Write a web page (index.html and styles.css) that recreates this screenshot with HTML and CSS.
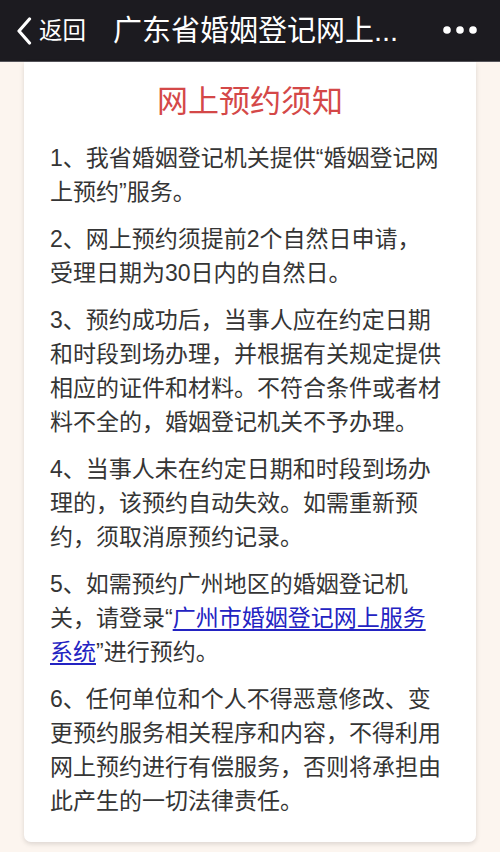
FILE: index.html
```html
<!DOCTYPE html>
<html lang="zh-CN">
<head>
<meta charset="utf-8">
<title>网上预约须知</title>
<link rel="stylesheet" href="styles.css">
</head>
<body>
<div class="page">
  <header class="navbar">
    <div class="back">
      <svg class="chevron" width="16" height="28" viewBox="0 0 16 28"><path d="M13.5 2 L3 14 L13.5 26" fill="none" stroke="#fff" stroke-width="3.2" stroke-linecap="round" stroke-linejoin="round"/></svg>
      <span class="back-text">返回</span>
    </div>
    <div class="nav-title">广东省婚姻登记网上...</div>
    <svg class="more" width="36" height="10" viewBox="0 0 36 10"><circle cx="4" cy="5" r="3.8" fill="#fff"/><circle cx="17" cy="5" r="3.8" fill="#fff"/><circle cx="30" cy="5" r="3.8" fill="#fff"/></svg>
  </header>
  <main class="card">
    <h1 class="card-title">网上预约须知</h1>
    <p class="item">1、我省婚姻登记机关提供“婚姻登记网<br>上预约”服务。</p>
    <p class="item">2、网上预约须提前2个自然日申请，<br>受理日期为30日内的自然日。</p>
    <p class="item">3、预约成功后，当事人应在约定日期<br>和时段到场办理，并根据有关规定提供<br>相应的证件和材料。不符合条件或者材<br>料不全的，婚姻登记机关不予办理。</p>
    <p class="item">4、当事人未在约定日期和时段到场办<br>理的，该预约自动失效。如需重新预<br>约，须取消原预约记录。</p>
    <p class="item">5、如需预约广州地区的婚姻登记机<br>关，请登录“<a class="link" href="#">广州市婚姻登记网上服务<br>系统</a>”进行预约。</p>
    <p class="item">6、任何单位和个人不得恶意修改、变<br>更预约服务相关程序和内容，不得利用<br>网上预约进行有偿服务，否则将承担由<br>此产生的一切法律责任。</p>
  </main>
</div>
</body>
</html>
```
FILE: styles.css
```css
html, body {
  margin: 0;
  padding: 0;
  background: #fcf5ef;
}

body {
  font-family: "Liberation Sans", "Noto Sans CJK SC", sans-serif;
  width: 500px;
  height: 852px;
  overflow: hidden;
}

.page {
  display: flex;
  flex-direction: column;
}

.navbar {
  height: 61px;
  background: #1c1b20;
  border-bottom: 1px solid #55545a;
  display: flex;
  align-items: center;
  color: #fff;
}

.back {
  display: flex;
  align-items: center;
  padding-left: 16px;
  width: 97px;
}

.chevron {
  display: block;
  margin-top: 1px;
}

.back-text {
  font-size: 23.5px;
  margin-left: 7px;
  line-height: 30px;
}

.nav-title {
  flex: 1;
  font-size: 29px;
  line-height: 36px;
  white-space: nowrap;
  margin-top: 1px;
}

.more {
  display: block;
  margin-right: 21px;
  margin-top: -2px;
}

.card {
  margin: 0 24px;
  background: #fff;
  border-radius: 0 0 7px 7px;
  box-shadow: 0 2px 5px rgba(0, 0, 0, 0.13);
  padding: 20px 14px 24px 26px;
}

.card-title {
  margin: 0 0 19px;
  text-align: center;
  font-size: 31px;
  line-height: 40px;
  font-weight: normal;
  color: #d44848;
  padding-right: 12px;
}

.item {
  margin: 0 0 13px;
  font-size: 23px;
  line-height: 34px;
  color: #353535;
  white-space: nowrap;
}

.item:last-child {
  margin-bottom: 0;
}

.link {
  color: #2323c2;
  text-decoration: underline;
  text-underline-offset: 3px;
}
```
